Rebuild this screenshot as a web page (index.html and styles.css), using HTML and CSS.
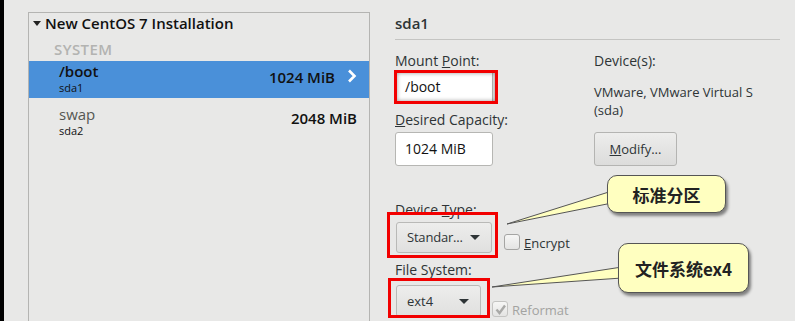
FILE: index.html
```html
<!DOCTYPE html>
<html>
<head>
    <title>Manual Partitioning</title>
    <link rel="stylesheet" href="styles.css">
</head>
<body>
    <div id="screen">
        <div class="lista">
            <div class="lista-titulo">
                <span class="seta-baixo"></span>New CentOS 7 Installation
            </div>
            <div class="grupo">SYSTEM</div>
            <div class="item selecionado">
                <div class="item-nome">
                    <div class="ponto">/boot</div>
                    <div class="disco">sda1</div>
                </div>
                <div class="tamanho">1024 MiB</div>
                <svg class="chevron" width="10" height="14" viewBox="0 0 10 14">
                    <polyline points="2,1.5 7.5,7 2,12.5" fill="none" stroke="#fff" stroke-width="2.6"/>
                </svg>
            </div>
            <div class="item segundo">
                <div class="item-nome">
                    <div class="ponto cinza">swap</div>
                    <div class="disco">sda2</div>
                </div>
                <div class="tamanho sem-seta">2048 MiB</div>
            </div>
        </div>

        <div class="detalhes">
            <div class="detalhes-titulo">sda1</div>
            <div class="colunas">
                <div class="coluna">
                    <label>Mount <u>P</u>oint:</label>
                    <div class="entrada entrada-ponto">/boot</div>
                    <label class="rotulo-cap"><u>D</u>esired Capacity:</label>
                    <div class="entrada entrada-cap">1024 MiB</div>

                    <label class="rotulo-tipo">Device <u>T</u>ype:</label>
                    <div class="linha">
                        <div class="combo combo-tipo">Standar...<span class="seta-combo"></span></div>
                        <span class="caixa"></span><span class="opcao"><u>E</u>ncrypt</span>
                    </div>
                    <label class="rotulo-fs">File System:</label>
                    <div class="linha linha-fs">
                        <div class="combo combo-fs">ext4<span class="seta-combo"></span></div>
                        <span class="caixa desativada">
                            <svg width="13" height="13" viewBox="0 0 13 13">
                                <polyline points="2.5,6.5 5.5,10 11,2.5" fill="none" stroke="#a9a9a7" stroke-width="2.4"/>
                            </svg>
                        </span><span class="opcao desativada-texto">Reformat</span>
                    </div>
                </div>
                <div class="coluna-direita">
                    <label>Device(s):</label>
                    <div class="dispositivo">VMware, VMware Virtual S<br>(sda)</div>
                    <div class="botao"><u>M</u>odify...</div>
                </div>
            </div>
        </div>

        <!-- anotações por cima da tela -->
        <div class="marca marca-ponto"></div>
        <div class="marca marca-tipo"></div>
        <div class="marca marca-fs"></div>

        <svg class="caudas" width="795" height="321" viewBox="0 0 795 321">
            <polygon points="507,224 612,191 612,203" fill="#ffffc0" stroke="#555" stroke-width="1"/>
            <polygon points="492,287 622,267 622,278" fill="#ffffc0" stroke="#555" stroke-width="1"/>
        </svg>
        <div class="balao balao-tipo">标准分区</div>
        <div class="balao balao-fs">文件系统ex4</div>
    </div>
</body>
</html>
```

FILE: styles.css
```css
body {
    margin: 0;
    background-color: #e8e8e7;
    font-family: "Open Sans", "DejaVu Sans", sans-serif;
    color: #2e3436;
}
#screen {
    position: relative;
    width: 795px;
    height: 321px;
    overflow: hidden;
    border-left: 4px solid #000;
    box-sizing: border-box;
    display: flex;
}
.lista {
    margin: 12px 0 0 24px;
    width: 342px;
    flex-shrink: 0;
    border: 1px solid #b4b4b2;
    border-bottom: none;
    box-sizing: border-box;
}
.lista-titulo {
    font-size: 15px;
    font-weight: 600;
    color: #111;
    height: 21px;
    line-height: 21px;
    padding-left: 4px;
}
.seta-baixo {
    display: inline-block;
    width: 0;
    height: 0;
    border-left: 4.5px solid transparent;
    border-right: 4.5px solid transparent;
    border-top: 5px solid #222;
    margin-right: 4px;
    vertical-align: 3px;
}
.grupo {
    font-size: 15px;
    font-weight: 600;
    letter-spacing: 0.4px;
    color: #b3b3b1;
    padding-left: 25px;
    padding-top: 3px;
    height: 24px;
    line-height: 24px;
}
.item {
    display: flex;
    align-items: flex-start;
    height: 37px;
    box-sizing: border-box;
    padding: 1px 12px 0 30px;
}
.item-nome {
    flex-grow: 1;
}
.ponto {
    font-size: 15px;
    font-weight: 600;
    line-height: 19px;
    height: 19px;
    color: #111;
}
.ponto.cinza {
    font-weight: 500;
    color: #555753;
}
.disco {
    font-size: 11px;
    line-height: 14px;
    height: 14px;
    color: #111;
}
.tamanho {
    font-size: 15px;
    font-weight: 600;
    line-height: 20px;
    color: #111;
    margin: 5px 12px 0 0;
}
.tamanho.sem-seta {
    margin: 3px 0 0 0;
}
.selecionado {
    background-color: #4a90d9;
}
.segundo {
    margin-top: 6px;
}
.chevron {
    display: block;
    margin-top: 7px;
}
.detalhes {
    margin-left: 25px;
    width: 385px;
    flex-shrink: 0;
}
.detalhes-titulo {
    font-size: 15px;
    font-weight: 600;
    color: #2e3436;
    padding: 13px 0 6px 0;
    height: 20px;
    line-height: 20px;
    border-bottom: 1px solid #c4c4c2;
}
.colunas {
    display: flex;
}
.coluna {
    width: 199px;
    flex-shrink: 0;
}
.coluna-direita {
    flex-grow: 1;
}
label {
    display: block;
    font-size: 14px;
    font-weight: 500;
    color: #2e3436;
    margin-top: 11px;
    height: 20px;
    line-height: 20px;
}
.entrada {
    width: 98px;
    height: 34px;
    box-sizing: border-box;
    background-color: #fff;
    border: 1px solid #b6b6b3;
    border-radius: 3px;
    font-size: 14px;
    line-height: 32px;
    padding-left: 9px;
    color: #111;
}
.entrada-ponto {
    margin-top: -1px;
}
.rotulo-cap {
    margin-top: 6px;
}
.entrada-cap {
    margin-top: 2px;
}
.rotulo-tipo {
    margin-top: 34px;
}
.rotulo-fs {
    margin-top: 7px;
}
.linha {
    display: flex;
    align-items: center;
    margin-top: 2px;
}
.linha-fs {
    margin-top: 3px;
}
.combo {
    height: 31px;
    box-sizing: border-box;
    border: 1px solid #b9b9b7;
    border-radius: 3px;
    background: linear-gradient(#ededec, #e0e0df);
    font-size: 13px;
    line-height: 29px;
    padding: 0 11px 0 10px;
    color: #2e3436;
    display: flex;
    align-items: center;
    justify-content: space-between;
    margin-left: 1px;
}
.combo-tipo {
    width: 96px;
    letter-spacing: -0.2px;
}
.combo-fs {
    width: 85px;
    height: 32px;
    padding-right: 11px;
}
.seta-combo {
    width: 0;
    height: 0;
    border-left: 5px solid transparent;
    border-right: 5px solid transparent;
    border-top: 5px solid #2e3436;
}
.caixa {
    width: 14px;
    height: 14px;
    border: 1px solid #a5a5a3;
    border-radius: 3px;
    background: linear-gradient(#f6f6f5, #e4e4e3);
    margin: 9px 0 0 12px;
    display: flex;
    align-items: center;
    justify-content: center;
}
.caixa.desativada {
    margin: 16px 0 0 11px;
    border-color: #c4c4c2;
}
.opcao {
    font-size: 13px;
    color: #2e3436;
    margin: 10px 0 0 4px;
}
.desativada-texto {
    color: #a3a3a1;
    margin-top: 18px;
}
.dispositivo {
    font-size: 13px;
    line-height: 18px;
    color: #2e3436;
    margin-top: 12px;
    height: 36px;
}
.botao {
    width: 83px;
    height: 34px;
    box-sizing: border-box;
    border: 1px solid #b4b4b2;
    border-radius: 3px;
    background: linear-gradient(#ededec, #dcdcdb);
    font-size: 13px;
    line-height: 32px;
    text-align: center;
    color: #2e3436;
    margin-top: 13px;
}
.marca {
    position: absolute;
    border: 3px solid #f20000;
    box-sizing: border-box;
}
.marca-ponto {
    left: 390px;
    top: 70px;
    width: 104px;
    height: 34px;
    box-shadow: inset 0 0 4px rgba(0, 0, 0, 0.4);
}
.marca-tipo {
    left: 383px;
    top: 212px;
    width: 111px;
    height: 46px;
}
.marca-fs {
    left: 384px;
    top: 278px;
    width: 102px;
    height: 40px;
}
.caudas {
    position: absolute;
    left: -4px;
    top: 0;
}
.balao {
    position: absolute;
    background-color: #ffffc0;
    border: 1px solid #555;
    border-radius: 10px;
    box-shadow: 2px 3px 3px rgba(0, 0, 0, 0.45);
    font-family: "Noto Sans CJK SC", "DejaVu Sans", sans-serif;
    font-weight: 700;
    font-size: 17px;
    color: #222;
    display: flex;
    align-items: center;
    justify-content: center;
    box-sizing: border-box;
}
.balao-tipo {
    left: 603px;
    top: 175px;
    width: 119px;
    height: 38px;
}
.balao-fs {
    left: 614px;
    top: 243px;
    width: 131px;
    height: 50px;
}
```
